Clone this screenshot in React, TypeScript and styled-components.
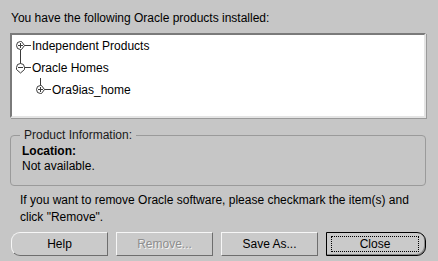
import React from "react";
import styled, { createGlobalStyle } from "styled-components";

const GlobalStyle = createGlobalStyle`
  html, body {
    margin: 0;
    padding: 0;
    background: #c6c6c6;
  }
  * {
    box-sizing: border-box;
  }
`;

const Dialog = styled.div`
  width: 438px;
  height: 261px;
  background: #c6c6c6;
  padding: 11px 12px 0 10px;
  display: flex;
  flex-direction: column;
  font-family: "Liberation Sans", Arial, sans-serif;
  font-size: 12px;
  color: #000;
`;

const Heading = styled.div`
  line-height: 14px;
  height: 14px;
  padding-left: 1px;
`;

const TreeBox = styled.div`
  margin-top: 8px;
  height: 85px;
  flex: none;
  background: #fff;
  border-top: 2px solid #7a7a7a;
  border-left: 2px solid #7a7a7a;
  border-right: 2px solid #e4e4e4;
  border-bottom: 2px solid #e4e4e4;
  box-shadow: 1px 1px 0 #9a9a9a;
`;

const TreeRow = styled.div<{ $level: number }>`
  display: flex;
  align-items: center;
  height: 22px;
  padding-left: ${(p) => 4 + p.$level * 20}px;
`;

const TreeLabel = styled.span`
  line-height: 14px;
  white-space: nowrap;
`;

const TreeGlyph = styled.svg`
  flex: none;
  overflow: visible;
  margin-right: 1px;
`;

type NodeProps = {
  level: number;
  label: string;
  expanded?: boolean;
  lineDown?: boolean;
  lineUp?: boolean;
};

function TreeNode({ level, label, expanded, lineDown, lineUp }: NodeProps) {
  const stroke = "#3a3a3a";
  return (
    <TreeRow $level={level}>
      <TreeGlyph width="15" height="22" viewBox="0 0 15 22">
        {lineUp && <line x1="4.5" y1="-1" x2="4.5" y2="7" stroke={stroke} />}
        {lineDown && <line x1="4.5" y1="15" x2="4.5" y2="30" stroke={stroke} />}
        {expanded ? (
          <>
            <path
              d="M0.5 10.5 A4 4 0 0 1 8.5 10.5 V12.5 L4.5 16 L0.5 12.5 Z"
              fill="#fff"
              stroke={stroke}
            />
            <line x1="2" y1="10.5" x2="7" y2="10.5" stroke={stroke} />
          </>
        ) : (
          <>
            <path
              d="M4.5 6.5 H5.5 L8.5 10.5 L5.5 14.5 H4.5 A4 4 0 0 1 4.5 6.5 Z"
              fill="#fff"
              stroke={stroke}
            />
            <line x1="2" y1="10.5" x2="7" y2="10.5" stroke={stroke} />
            <line x1="4.5" y1="8" x2="4.5" y2="13" stroke={stroke} />
          </>
        )}
        <line x1="8.5" y1="10.5" x2="15" y2="10.5" stroke={stroke} />
      </TreeGlyph>
      <TreeLabel>{label}</TreeLabel>
    </TreeRow>
  );
}

const InfoGroup = styled.fieldset`
  margin: 10px 0 0 0;
  padding: 2px 10px 0 11px;
  height: 58px;
  flex: none;
  border: 1px solid #9a9a9a;
  border-radius: 4px;
  min-width: 0;
`;

const InfoLegend = styled.legend`
  margin-left: -2px;
  padding: 0 4px;
  line-height: 14px;
  color: #1a1a1a;
`;

const InfoLabel = styled.div`
  font-weight: bold;
  line-height: 15px;
`;

const InfoValue = styled.div`
  line-height: 15px;
`;

const Note = styled.p`
  margin: 6px 0 0 0;
  padding-left: 10px;
  line-height: 17px;
`;

const ButtonRow = styled.div`
  margin-top: 6px;
  display: flex;
  gap: 8px;
  padding-left: 1px;
`;

const Button = styled.button<{
  $shape?: "left" | "right";
  $focused?: boolean;
  $wide?: boolean;
}>`
  position: relative;
  width: ${(p) => (p.$wide ? 100 : 97)}px;
  height: 24px;
  padding: 0;
  font-family: "Liberation Sans", Arial, sans-serif;
  font-size: 12px;
  color: #000;
  background: #cacaca;
  border-style: solid;
  border-width: 1px;
  border-color: ${(p) =>
    p.$focused ? "#000" : "#f6f6f6 #6e6e6e #6e6e6e #f6f6f6"};
  border-radius: ${(p) =>
    p.$shape === "left" ? "9px 0 0 9px" : p.$shape === "right" ? "0 9px 9px 0" : "0"};
  box-shadow: ${(p) => (p.$focused ? "inset -1px -1px 0 #8a8a8a" : "none")};
  &:disabled {
    color: #8e8e8e;
    text-shadow: 1px 1px 0 #f4f4f4;
  }
`;

const FocusRing = styled.span`
  position: absolute;
  inset: 3px 6px 3px 4px;
  border: 1px dotted #000;
  display: flex;
  align-items: center;
  justify-content: center;
`;

export default function App() {
  return (
    <>
      <GlobalStyle />
      <Dialog>
        <Heading>You have the following Oracle products installed:</Heading>
        <TreeBox>
          <TreeNode level={0} label="Independent Products" lineDown />
          <TreeNode level={0} label="Oracle Homes" expanded />
          <TreeNode level={1} label="Ora9ias_home" lineUp />
        </TreeBox>
        <InfoGroup>
          <InfoLegend>Product Information:</InfoLegend>
          <InfoLabel>Location:</InfoLabel>
          <InfoValue>Not available.</InfoValue>
        </InfoGroup>
        <Note>
          If you want to remove Oracle software, please checkmark the item(s) and
          <br />
          click "Remove".
        </Note>
        <ButtonRow>
          <Button $shape="left">Help</Button>
          <Button disabled>Remove...</Button>
          <Button>Save As...</Button>
          <Button $shape="right" $focused $wide>
            <FocusRing>Close</FocusRing>
          </Button>
        </ButtonRow>
      </Dialog>
    </>
  );
}
